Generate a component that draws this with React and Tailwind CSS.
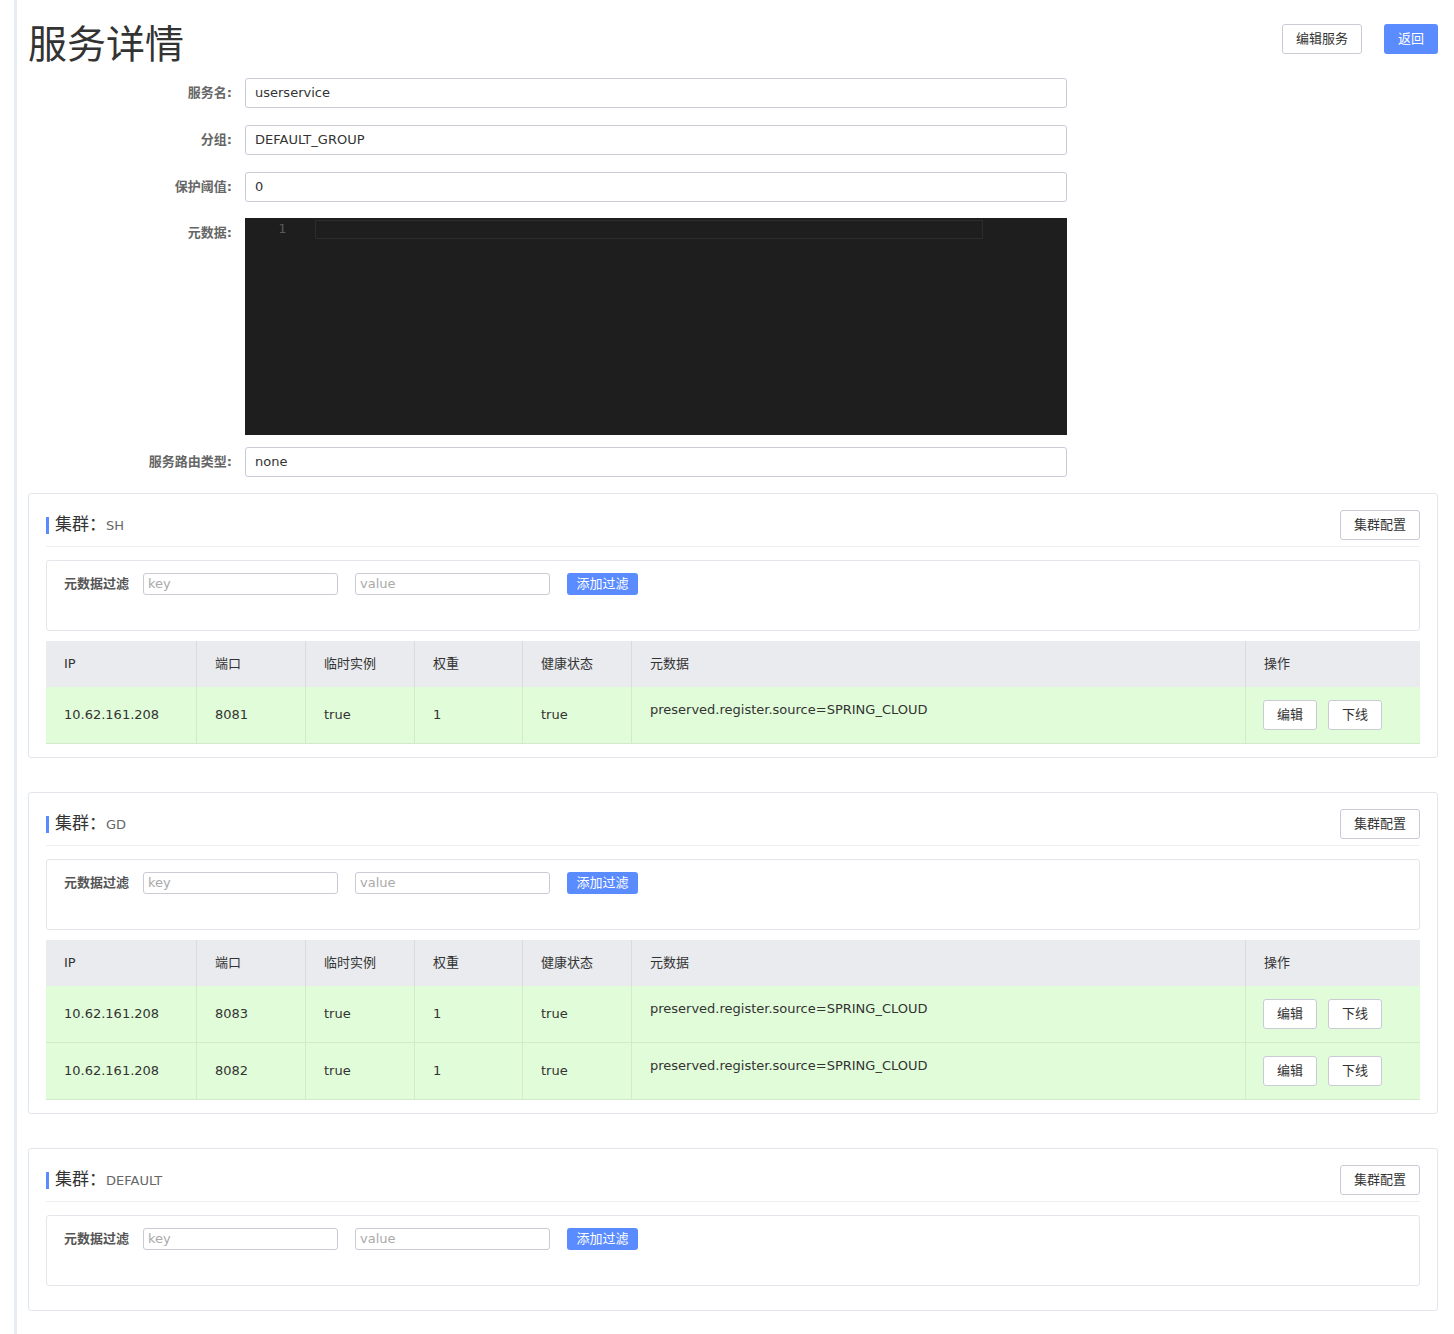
import React from "react";

const font = { fontFamily: '"DejaVu Sans", "Noto Sans CJK SC", sans-serif' };

const clusters = [
  {
    name: "SH",
    rows: [{ ip: "10.62.161.208", port: "8081" }],
  },
  {
    name: "GD",
    rows: [
      { ip: "10.62.161.208", port: "8083" },
      { ip: "10.62.161.208", port: "8082" },
    ],
  },
  { name: "DEFAULT", rows: [] },
];

const cols = [
  { title: "IP", w: "w-[150px]" },
  { title: "端口", w: "w-[109px]" },
  { title: "临时实例", w: "w-[109px]" },
  { title: "权重", w: "w-[108px]" },
  { title: "健康状态", w: "w-[109px]" },
  { title: "元数据", w: "w-[614px]" },
  { title: "操作", w: "flex-1" },
];

function FormRow({ label, value, className = "" }) {
  return (
    <div className={"flex items-center h-[30px] " + className}>
      <div className="w-[217px] pr-[13px] text-right text-[13px] font-semibold text-[#666]">{label}</div>
      <div className="w-[822px] h-[30px] border border-[#c9ccd6] rounded-[3px] px-[9px] flex items-center text-[13px] text-[#333]">
        {value}
      </div>
    </div>
  );
}

function SmallButton({ children, className = "" }) {
  return (
    <button
      className={
        "h-[30px] border border-[#c9ccd6] rounded-[3px] bg-white text-[13px] text-[#333] flex items-center justify-center " +
        className
      }
    >
      {children}
    </button>
  );
}

function Cluster({ cluster }) {
  const hasRows = cluster.rows.length > 0;
  return (
    <div className={"border border-[#e4e6eb] rounded-[3px] px-[17px] pt-[16px] " + (hasRows ? "pb-[13px]" : "pb-[24px]")}>
      <div className="flex items-center justify-between h-[30px]">
        <div className="flex items-center">
          <div className="w-[3px] h-[17px] bg-[#5a8bff] mr-[6px]" />
          <span className="text-[17px] text-[#333]">集群：</span>
          <span className="text-[13px] text-[#666] mt-[2px]">{cluster.name}</span>
        </div>
        <SmallButton className="w-[80px]">集群配置</SmallButton>
      </div>
      <div className="h-px bg-[#eceef2] mt-[6px]" />
      <div className="mt-[13px] border border-[#e4e6eb] rounded-[3px] h-[71px] pt-[12px] pl-[17px]">
        <div className="flex items-center h-[22px]">
          <span className="text-[13px] font-semibold text-[#555] w-[79px]">元数据过滤</span>
          <div className="w-[195px] h-[22px] border border-[#c9ccd6] rounded-[3px] px-[4px] flex items-center text-[13px] text-[#aaa]">key</div>
          <div className="w-[195px] h-[22px] border border-[#c9ccd6] rounded-[3px] px-[4px] flex items-center text-[13px] text-[#aaa] ml-[17px]">value</div>
          <button className="ml-[17px] w-[71px] h-[22px] rounded-[3px] bg-[#5a8bff] text-white text-[13px] flex items-center justify-center">添加过滤</button>
        </div>
      </div>
      {hasRows && (
        <div className="mt-[10px]">
          <div className="flex h-[46px] bg-[#e9ebef]">
            {cols.map((c, i) => (
              <div
                key={c.title}
                className={c.w + " flex items-center pl-[18px] text-[13px] text-[#333] " + (i > 0 ? "border-l border-[#d8dbe1]" : "")}
              >
                {c.title}
              </div>
            ))}
          </div>
          {cluster.rows.map((r, ri) => (
            <div key={ri} className="flex h-[57px] bg-[#e1fcd9] border-b border-[#d4e8ce]">
              {[r.ip, r.port, "true", "1", "true"].map((v, i) => (
                <div
                  key={i}
                  className={cols[i].w + " flex items-center pl-[18px] text-[13px] text-[#333] " + (i > 0 ? "border-l border-[#d4e8ce]" : "")}
                >
                  {v}
                </div>
              ))}
              <div className="w-[614px] border-l border-[#d4e8ce] pl-[18px] pt-[13px] text-[13px] text-[#333]">
                preserved.register.source=SPRING_CLOUD
              </div>
              <div className="flex-1 border-l border-[#d4e8ce] flex items-center pl-[17px] gap-[11px]">
                <SmallButton className="w-[54px]">编辑</SmallButton>
                <SmallButton className="w-[54px]">下线</SmallButton>
              </div>
            </div>
          ))}
        </div>
      )}
    </div>
  );
}

export default function App() {
  return (
    <div className="flex min-h-[1334px] bg-white" style={font}>
      <div className="w-[14px] shrink-0" />
      <div className="w-[3px] shrink-0 bg-[#e8ecf3]" />
      <div className="flex-1 pl-[11px] pr-[16px]">
        <div className="flex justify-between">
          <h1 className="text-[39px] leading-[56px] text-[#333] mt-[17px] h-[55px]">服务详情</h1>
          <div className="flex gap-[22px] mt-[24px]">
            <SmallButton className="w-[80px]">编辑服务</SmallButton>
            <button className="w-[54px] h-[30px] rounded-[3px] bg-[#5a8bff] text-white text-[13px]">返回</button>
          </div>
        </div>
        <div className="flex flex-col mt-[6px]">
          <FormRow label="服务名:" value="userservice" />
          <FormRow label="分组:" value="DEFAULT_GROUP" className="mt-[17px]" />
          <FormRow label="保护阈值:" value="0" className="mt-[17px]" />
          <div className="flex mt-[16px]">
            <div className="w-[217px] pr-[13px] pt-[5px] text-right text-[13px] font-semibold text-[#666]">元数据:</div>
            <div className="w-[822px] h-[217px] bg-[#1e1e1e] flex pt-[2px]">
              <div className="w-[70px] text-right pr-[29px] text-[13px] leading-[18px] text-[#5a5a5a]" style={{ fontFamily: '"DejaVu Sans Mono", monospace' }}>1</div>
              <div className="w-[668px] h-[19px] border border-[#2c2c2c]" />
            </div>
          </div>
          <FormRow label="服务路由类型:" value="none" className="mt-[12px]" />
        </div>
        <div className="flex flex-col gap-[34px] mt-[16px]">
          {clusters.map((c) => (
            <Cluster key={c.name} cluster={c} />
          ))}
        </div>
      </div>
    </div>
  );
}
